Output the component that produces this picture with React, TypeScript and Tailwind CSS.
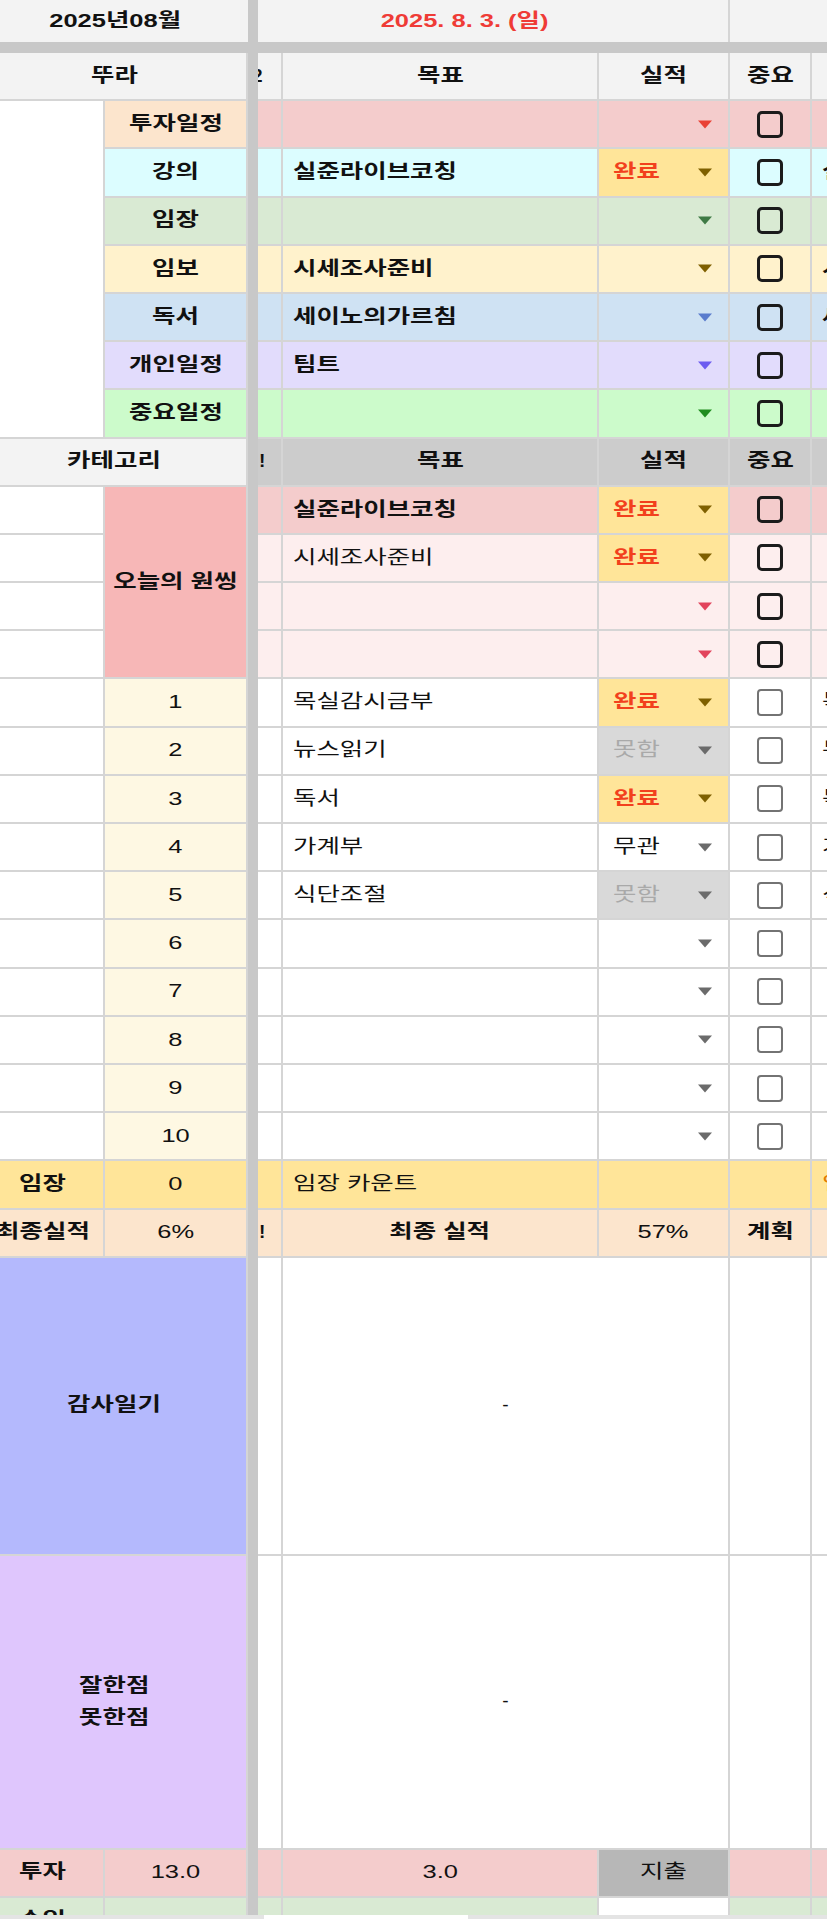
import React from "react";

const B = "border-r-2 border-b-2 border-[#d5d5d5]";

function T({ children, left }: { children: React.ReactNode; left?: boolean }) {
  return (
    <span
      className={
        left
          ? "inline-block whitespace-nowrap scale-x-[1.34] origin-left"
          : "inline-block whitespace-nowrap scale-x-[1.34]"
      }
    >
      {children}
    </span>
  );
}

function Caret({ color }: { color: string }) {
  return (
    <svg width="16" height="9" viewBox="0 0 16 9" className="shrink-0">
      <path d="M1 0.5 L15 0.5 L8 8.5 Z" fill={color} />
    </svg>
  );
}

function Check({ dark }: { dark: boolean }) {
  return dark ? (
    <div className="w-[26px] h-[27px] border-[3px] border-[#1b1b1b] rounded-[5px]" />
  ) : (
    <div className="w-[26px] h-[27px] border-2 border-[#737373] rounded-[4px]" />
  );
}

type Status = "완료" | "못함" | "무관" | "";

function Result({ status, caret, bg }: { status: Status; caret: string; bg: string }) {
  let cls = bg;
  let txt = "";
  if (status === "완료") {
    cls = "bg-[#ffe599]";
    txt = "text-[#f2401d] font-bold";
  } else if (status === "못함") {
    cls = "bg-[#d9d9d9]";
    txt = "text-[#a9a9a9]";
  } else if (status === "무관") {
    txt = "text-[#111]";
  }
  return (
    <div className={`${B} ${cls} flex items-center justify-between pl-[14px] pr-[15px]`}>
      <span className={txt}>
        <T left>{status}</T>
      </span>
      <Caret color={caret} />
    </div>
  );
}

function Div() {
  return <div className="bg-[#c8c8c8]" />;
}

const sec1 = [
  { label: "투자일정", lbg: "bg-[#fce5cd]", bg: "bg-[#f4cccc]", goal: "", status: "" as Status, caret: "#e94235", g: "" },
  { label: "강의", lbg: "bg-[#dcfdff]", bg: "bg-[#dcfdff]", goal: "실준라이브코칭", status: "완료" as Status, caret: "#7f6000", g: "실" },
  { label: "임장", lbg: "bg-[#d9ead3]", bg: "bg-[#d9ead3]", goal: "", status: "" as Status, caret: "#3f7a45", g: "" },
  { label: "임보", lbg: "bg-[#fff2cc]", bg: "bg-[#fff2cc]", goal: "시세조사준비", status: "" as Status, caret: "#7f6000", g: "시" },
  { label: "독서", lbg: "bg-[#cfe2f3]", bg: "bg-[#cfe2f3]", goal: "세이노의가르침", status: "" as Status, caret: "#5a7ccd", g: "세" },
  { label: "개인일정", lbg: "bg-[#e2dcfc]", bg: "bg-[#e2dcfc]", goal: "팀트", status: "" as Status, caret: "#6c5cf0", g: "" },
  { label: "중요일정", lbg: "bg-[#ccfbcb]", bg: "bg-[#ccfbcb]", goal: "", status: "" as Status, caret: "#1f8c1f", g: "" },
];

const oneThing = [
  { bg: "bg-[#f4cccc]", goal: "실준라이브코칭", bold: true, status: "완료" as Status, caret: "#7f6000" },
  { bg: "bg-[#fdeeee]", goal: "시세조사준비", bold: false, status: "완료" as Status, caret: "#7f6000" },
  { bg: "bg-[#fdeeee]", goal: "", bold: false, status: "" as Status, caret: "#e2445c" },
  { bg: "bg-[#fdeeee]", goal: "", bold: false, status: "" as Status, caret: "#e2445c" },
];

const tasks: { goal: string; status: Status }[] = [
  { goal: "목실감시금부", status: "완료" },
  { goal: "뉴스읽기", status: "못함" },
  { goal: "독서", status: "완료" },
  { goal: "가계부", status: "무관" },
  { goal: "식단조절", status: "못함" },
  { goal: "", status: "" },
  { goal: "", status: "" },
  { goal: "", status: "" },
  { goal: "", status: "" },
  { goal: "", status: "" },
];

export default function App() {
  return (
    <div className="relative w-[827px] h-[1919px] overflow-hidden bg-white font-['Liberation_Sans','Noto_Sans_CJK_KR',sans-serif] text-[19px] text-[#111]">
      <div className="ml-[-18px] w-[890px] grid grid-cols-[123px_143px_10px_25px_316px_131px_82px_60px] grid-rows-[42px_11px_repeat(25,48.2px)_298px_294px_48px_48px]">
        {/* Row 1 */}
        <div className="col-span-2 bg-[#f3f3f3] flex items-center justify-center font-bold">
          <T>2025년08월</T>
        </div>
        <Div />
        <div className="col-span-3 bg-[#f3f3f3] border-r-2 border-[#d5d5d5] flex items-center justify-center pr-[56px] font-bold text-[#ef3b36]">
          <T>2025. 8. 3. (일)</T>
        </div>
        <div className="col-span-2 bg-[#f3f3f3]" />

        {/* Band */}
        <div className="col-span-8 bg-[#c8c8c8]" />

        {/* Header 1 */}
        <div className={`col-span-2 ${B} bg-[#f3f3f3] flex items-center justify-center font-bold`}>
          <T>뚜라</T>
        </div>
        <Div />
        <div className={`${B} bg-[#f3f3f3] flex items-center overflow-hidden font-bold`}>
          <span className="ml-[-6px]">2</span>
        </div>
        <div className={`${B} bg-[#f3f3f3] flex items-center justify-center font-bold`}>
          <T>목표</T>
        </div>
        <div className={`${B} bg-[#f3f3f3] flex items-center justify-center font-bold`}>
          <T>실적</T>
        </div>
        <div className={`${B} bg-[#f3f3f3] flex items-center justify-center font-bold`}>
          <T>중요</T>
        </div>
        <div className={`${B} bg-[#f3f3f3]`} />

        {/* Section 1 */}
        {sec1.map((r, i) => (
          <React.Fragment key={r.label}>
            {i === 0 && <div className={`row-span-7 ${B} bg-white`} />}
            <div className={`${B} ${r.lbg} flex items-center justify-center font-bold`}>
              <T>{r.label}</T>
            </div>
            <Div />
            <div className={`${B} ${r.bg}`} />
            <div className={`${B} ${r.bg} flex items-center pl-[10px] font-bold`}>
              <T left>{r.goal}</T>
            </div>
            <Result status={r.status} caret={r.caret} bg={r.bg} />
            <div className={`${B} ${r.bg} flex items-center justify-center`}>
              <Check dark />
            </div>
            <div className={`${B} ${r.bg} flex items-center pl-[10px] overflow-hidden whitespace-nowrap font-bold`}>
              <T left>{r.g}</T>
            </div>
          </React.Fragment>
        ))}

        {/* Header 2 */}
        <div className={`col-span-2 ${B} bg-[#f3f3f3] flex items-center justify-center font-bold`}>
          <T>카테고리</T>
        </div>
        <Div />
        <div className={`${B} bg-[#cccccc] flex items-center overflow-hidden font-bold`}>
          <span className="ml-[1px]">!</span>
        </div>
        <div className={`${B} bg-[#cccccc] flex items-center justify-center font-bold`}>
          <T>목표</T>
        </div>
        <div className={`${B} bg-[#cccccc] flex items-center justify-center font-bold`}>
          <T>실적</T>
        </div>
        <div className={`${B} bg-[#cccccc] flex items-center justify-center font-bold`}>
          <T>중요</T>
        </div>
        <div className={`${B} bg-[#cccccc]`} />

        {/* One thing */}
        {oneThing.map((r, i) => (
          <React.Fragment key={"o" + i}>
            <div className={`${B} bg-white`} />
            {i === 0 && (
              <div className={`row-span-4 ${B} bg-[#f7b7b7] flex items-center justify-center font-bold`}>
                <T>오늘의 원씽</T>
              </div>
            )}
            <Div />
            <div className={`${B} ${r.bg}`} />
            <div className={`${B} ${r.bg} flex items-center pl-[10px] ${r.bold ? "font-bold" : ""}`}>
              <T left>{r.goal}</T>
            </div>
            <Result status={r.status} caret={r.caret} bg={r.bg} />
            <div className={`${B} ${r.bg} flex items-center justify-center`}>
              <Check dark />
            </div>
            <div className={`${B} ${r.bg}`} />
          </React.Fragment>
        ))}

        {/* Tasks 1-10 */}
        {tasks.map((t, i) => (
          <React.Fragment key={"t" + i}>
            <div className={`${B} bg-white`} />
            <div className={`${B} bg-[#fef8e3] flex items-center justify-center`}>
              <T>{i + 1}</T>
            </div>
            <Div />
            <div className={`${B} bg-white`} />
            <div className={`${B} bg-white flex items-center pl-[10px]`}>
              <T left>{t.goal}</T>
            </div>
            <Result status={t.status} caret={t.status === "완료" ? "#7f6000" : "#6b6b6b"} bg="bg-white" />
            <div className={`${B} bg-white flex items-center justify-center`}>
              <Check dark={false} />
            </div>
            <div className={`${B} bg-white flex items-center pl-[10px] overflow-hidden whitespace-nowrap`}>
              <T left>{t.goal.slice(0, 1)}</T>
            </div>
          </React.Fragment>
        ))}

        {/* 임장 */}
        <div className={`${B} bg-[#ffe599] flex items-center justify-center font-bold`}>
          <T>임장</T>
        </div>
        <div className={`${B} bg-[#ffe599] flex items-center justify-center`}>
          <T>0</T>
        </div>
        <Div />
        <div className={`${B} bg-[#ffe599]`} />
        <div className={`${B} bg-[#ffe599] flex items-center pl-[10px]`}>
          <T left>임장 카운트</T>
        </div>
        <div className={`${B} bg-[#ffe599]`} />
        <div className={`${B} bg-[#ffe599]`} />
        <div className={`${B} bg-[#ffe599] flex items-center pl-[10px] overflow-hidden whitespace-nowrap text-[#e07b00]`}>
          <T left>임</T>
        </div>

        {/* 최종실적 */}
        <div className={`${B} bg-[#fce5cd] flex items-center justify-center font-bold`}>
          <T>최종실적</T>
        </div>
        <div className={`${B} bg-[#fce5cd] flex items-center justify-center`}>
          <T>6%</T>
        </div>
        <Div />
        <div className={`${B} bg-[#fce5cd] flex items-center overflow-hidden font-bold`}>
          <span className="ml-[1px]">!</span>
        </div>
        <div className={`${B} bg-[#fce5cd] flex items-center justify-center font-bold`}>
          <T>최종 실적</T>
        </div>
        <div className={`${B} bg-[#fce5cd] flex items-center justify-center`}>
          <T>57%</T>
        </div>
        <div className={`${B} bg-[#fce5cd] flex items-center justify-center font-bold`}>
          <T>계획</T>
        </div>
        <div className={`${B} bg-[#fce5cd]`} />

        {/* 감사일기 */}
        <div className={`col-span-2 ${B} bg-[#b4b9fd] flex items-center justify-center font-bold`}>
          <T>감사일기</T>
        </div>
        <Div />
        <div className={`${B} bg-white`} />
        <div className={`col-span-2 ${B} bg-white flex items-center justify-center`}>-</div>
        <div className={`${B} bg-white`} />
        <div className={`${B} bg-white`} />

        {/* 잘한점 */}
        <div className={`col-span-2 ${B} bg-[#dfc6fd] flex flex-col items-center justify-center font-bold leading-[32px]`}>
          <T>잘한점</T>
          <T>못한점</T>
        </div>
        <Div />
        <div className={`${B} bg-white`} />
        <div className={`col-span-2 ${B} bg-white flex items-center justify-center`}>-</div>
        <div className={`${B} bg-white`} />
        <div className={`${B} bg-white`} />

        {/* 투자 */}
        <div className={`${B} bg-[#f4cccc] flex items-center justify-center font-bold`}>
          <T>투자</T>
        </div>
        <div className={`${B} bg-[#f4cccc] flex items-center justify-center`}>
          <T>13.0</T>
        </div>
        <Div />
        <div className={`${B} bg-[#f4cccc]`} />
        <div className={`${B} bg-[#f4cccc] flex items-center justify-center`}>
          <T>3.0</T>
        </div>
        <div className={`${B} bg-[#b7b7b7] flex items-center justify-center`}>
          <T>지출</T>
        </div>
        <div className={`${B} bg-[#f4cccc]`} />
        <div className={`${B} bg-[#f4cccc]`} />

        {/* 수입 */}
        <div className={`${B} bg-[#d9ead3] flex items-center justify-center font-bold`}>
          <T>수입</T>
        </div>
        <div className={`${B} bg-[#d9ead3]`} />
        <Div />
        <div className={`${B} bg-[#d9ead3]`} />
        <div className={`${B} bg-[#d9ead3]`} />
        <div className={`${B} bg-white`} />
        <div className={`${B} bg-[#d9ead3]`} />
        <div className={`${B} bg-[#d9ead3]`} />
      </div>

      {/* bottom scrollbar strip */}
      <div className="absolute bottom-0 left-0 w-full h-[4px] bg-[#e4e4e4]">
        <div className="absolute left-[264px] top-0 w-[204px] h-full bg-white" />
      </div>
    </div>
  );
}
